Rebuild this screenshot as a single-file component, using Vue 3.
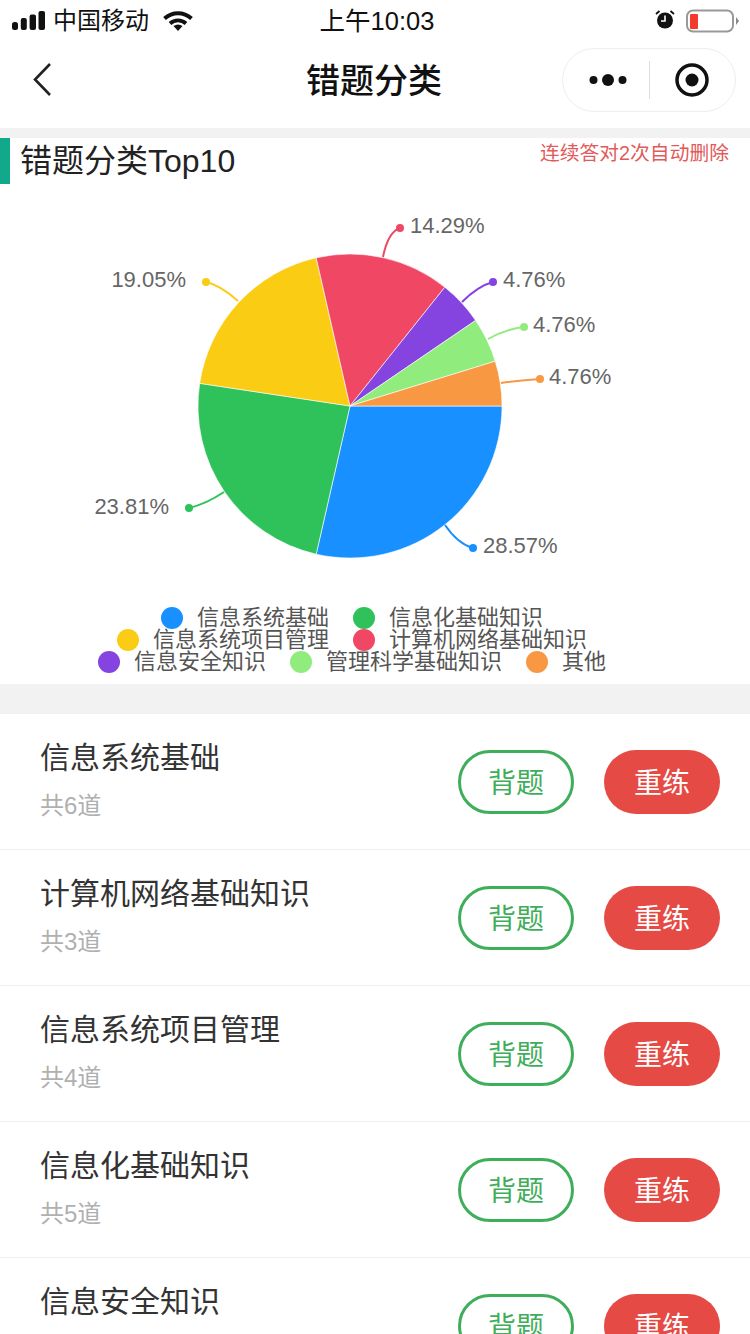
<script setup>
const cx = 350
const cy = 406
const r = 152

const data = [
  { name: '信息系统基础', pct: 28.57, color: '#1890ff' },
  { name: '信息化基础知识', pct: 23.81, color: '#2fc25b' },
  { name: '信息系统项目管理', pct: 19.05, color: '#facc14' },
  { name: '计算机网络基础知识', pct: 14.29, color: '#f04864' },
  { name: '信息安全知识', pct: 4.76, color: '#8543e0' },
  { name: '管理科学基础知识', pct: 4.76, color: '#90ed7d' },
  { name: '其他', pct: 4.76, color: '#f89842' }
]

// slices run clockwise from 3 o'clock
let angle = 0
const slices = data.map((d) => {
  const start = angle
  angle += (d.pct / 100) * Math.PI * 2
  const x1 = cx + r * Math.cos(start)
  const y1 = cy + r * Math.sin(start)
  const x2 = cx + r * Math.cos(angle)
  const y2 = cy + r * Math.sin(angle)
  const large = angle - start > Math.PI ? 1 : 0
  return {
    color: d.color,
    d: `M${cx} ${cy}L${x1} ${y1}A${r} ${r} 0 ${large} 1 ${x2} ${y2}Z`
  }
})

const labels = [
  { text: '28.57%', color: '#1890ff', line: 'M445 525Q458 544 473 548', dot: [473, 548], x: 483, y: 553, anchor: 'start' },
  { text: '23.81%', color: '#2fc25b', line: 'M224 492Q206 504 189 508', dot: [189, 508], x: 169, y: 514, anchor: 'end' },
  { text: '19.05%', color: '#facc14', line: 'M238 301Q220 285 206 282', dot: [206, 282], x: 186, y: 287, anchor: 'end' },
  { text: '14.29%', color: '#f04864', line: 'M383 257Q388 232 400 228', dot: [400, 228], x: 410, y: 233, anchor: 'start' },
  { text: '4.76%', color: '#8543e0', line: 'M462 302Q478 286 493 282', dot: [493, 282], x: 503, y: 287, anchor: 'start' },
  { text: '4.76%', color: '#90ed7d', line: 'M488 339Q506 329 524 327', dot: [524, 327], x: 533, y: 332, anchor: 'start' },
  { text: '4.76%', color: '#f89842', line: 'M501 383Q522 380 540 379', dot: [540, 379], x: 549, y: 384, anchor: 'start' }
]

const legendRows = [data.slice(0, 2), data.slice(2, 4), data.slice(4)]

const list = [
  { name: '信息系统基础', count: 6 },
  { name: '计算机网络基础知识', count: 3 },
  { name: '信息系统项目管理', count: 4 },
  { name: '信息化基础知识', count: 5 },
  { name: '信息安全知识', count: 1 }
]
</script>

<template>
  <div class="page">
    <div class="status">
      <div class="status-left">
        <svg class="signal" width="34" height="20" viewBox="0 0 34 20">
          <rect x="0" y="11" width="6" height="8" rx="2.500" fill="#111" />
          <rect x="8.800" y="7" width="6" height="12" rx="2" fill="#111" />
          <rect x="17.600" y="3.500" width="6.400" height="15.500" rx="2" fill="#111" />
          <rect x="26.500" y="0" width="6.500" height="19" rx="2" fill="#111" />
        </svg>
        <span class="carrier">中国移动</span>
        <svg class="wifi" width="30" height="20" viewBox="0 0 30 20">
          <path d="M1.500 7.500C9.500 .5 20.500 .5 28.500 7.500" fill="none" stroke="#111" stroke-width="4" />
          <path d="M7 12.500C11.500 8.300 18.500 8.300 23 12.500" fill="none" stroke="#111" stroke-width="3.800" />
          <path d="M10.500 15Q15 12 19.500 15L15 20Z" fill="#111" />
        </svg>
      </div>
      <div class="time">上午10:03</div>
      <div class="status-right">
        <svg class="alarm" width="20" height="20" viewBox="0 0 20 20">
          <circle cx="10" cy="10.500" r="8" fill="#111" />
          <path d="M10 5.500V11H6" fill="none" stroke="#fff" stroke-width="1.600" />
          <path d="M1 4L4.500 1M19 4L15.500 1" stroke="#111" stroke-width="1.800" />
        </svg>
        <svg class="battery" width="53" height="24" viewBox="0 0 53 24">
          <rect x="1" y="1.500" width="46" height="21" rx="6" fill="#fff" stroke="#999" stroke-width="2" />
          <rect x="4" y="5" width="8" height="15" rx="1" fill="#f4392d" />
          <path d="M50 8L53 12L50 16Z" fill="#888" />
        </svg>
      </div>
    </div>

    <div class="nav">
      <div class="nav-left">
        <svg width="20" height="36" viewBox="0 0 20 36">
          <path d="M18 2L3 17.500L18 33" fill="none" stroke="#222" stroke-width="2.600" />
        </svg>
      </div>
      <div class="nav-title">错题分类</div>
      <div class="capsule">
        <div class="capsule-side">
          <svg class="more" width="38" height="16" viewBox="0 0 38 16">
            <circle cx="4.500" cy="8" r="4" fill="#111" />
            <circle cx="19" cy="8" r="6" fill="#111" />
            <circle cx="33.500" cy="8" r="4" fill="#111" />
          </svg>
        </div>
        <div class="capsule-line"></div>
        <div class="capsule-side">
          <svg width="36" height="36" viewBox="0 0 36 36">
            <circle cx="18" cy="18" r="15" fill="none" stroke="#111" stroke-width="3.500" />
            <circle cx="18" cy="18" r="6.500" fill="#111" />
          </svg>
        </div>
      </div>
    </div>

    <div class="band-top"></div>

    <div class="head">
      <div class="head-title">错题分类Top10</div>
      <div class="head-note">连续答对2次自动删除</div>
    </div>

    <svg class="chart" width="750" height="423" viewBox="0 184 750 423">
      <path v-for="s in slices" :key="s.color" :d="s.d" :fill="s.color" stroke="#fff" stroke-width="0.600" />
      <g v-for="l in labels" :key="l.color">
        <path :d="l.line" fill="none" :stroke="l.color" stroke-width="2" />
        <circle :cx="l.dot[0]" :cy="l.dot[1]" r="4" :fill="l.color" />
        <text :x="l.x" :y="l.y" :text-anchor="l.anchor" class="chart-label">{{ l.text }}</text>
      </g>
    </svg>

    <div class="legend">
      <div v-for="(row, i) in legendRows" :key="i" class="legend-row">
        <div v-for="d in row" :key="d.name" class="legend-item">
          <span class="legend-dot" :style="{ background: d.color }"></span>
          <span class="legend-name">{{ d.name }}</span>
        </div>
      </div>
    </div>

    <div class="band"></div>

    <div class="list">
      <div v-for="item in list" :key="item.name" class="row">
        <div class="row-text">
          <div class="row-name">{{ item.name }}</div>
          <div class="row-count">共{{ item.count }}道</div>
        </div>
        <div class="btn btn-outline"><span>背题</span></div>
        <div class="btn btn-solid"><span>重练</span></div>
      </div>
    </div>
  </div>
</template>

<style scoped>
.page {
  width: 750px;
  height: 1334px;
  overflow: hidden;
  background: #fff;
  font-family: "Liberation Sans", "Noto Sans CJK SC", sans-serif;
  color: #333;
}

.status {
  height: 40px;
  display: grid;
  grid-template-columns: 1fr auto 1fr;
  align-items: center;
  padding: 0 11px 0 12px;
  color: #111;
}

.status-left {
  display: flex;
  align-items: center;
}

.carrier {
  font-size: 24px;
  margin: 0 0 4px 7px;
}

.wifi {
  margin-left: 14px;
}

.time {
  font-size: 25.500px;
  margin: 0 0 4px 3px;
}

.status-right {
  display: flex;
  align-items: center;
  justify-content: flex-end;
}

.alarm {
  margin-bottom: 1px;
}

.battery {
  margin-left: 11px;
}

.nav {
  height: 88px;
  padding-bottom: 8px;
  box-sizing: border-box;
  display: grid;
  grid-template-columns: 1fr auto 1fr;
  align-items: center;
}

.nav-left {
  padding-left: 32px;
  display: flex;
  align-items: center;
}

.nav-title {
  font-size: 34px;
  font-weight: 500;
  color: #111;
  margin: 0 2px 4px 0;
}

.capsule {
  justify-self: end;
  margin-right: 14px;
  width: 174px;
  height: 64px;
  box-sizing: border-box;
  border: 1px solid #eee;
  border-radius: 32px;
  display: flex;
  align-items: center;
}

.capsule-side {
  flex: 1;
  display: flex;
  align-items: center;
  justify-content: center;
}

.more {
  margin-left: 4px;
}

.capsule-line {
  width: 1px;
  height: 38px;
  background: #ddd;
}

.band-top {
  height: 10px;
  background: #f2f2f2;
}

.head {
  height: 46px;
  display: flex;
  justify-content: space-between;
  align-items: flex-start;
  border-left: 10px solid #12a88c;
  padding-right: 21px;
}

.head-title {
  font-size: 32px;
  line-height: 46px;
  margin-left: 10px;
  color: #222;
}

.head-note {
  font-size: 19.800px;
  line-height: 30px;
  color: #e25a5a;
}

.chart {
  display: block;
}

.chart-label {
  font-size: 22px;
  fill: #666;
}

.legend {
  height: 77px;
  padding-right: 46px;
  box-sizing: border-box;
}

.legend-row {
  height: 22px;
  display: flex;
  justify-content: center;
  gap: 24px;
}

.legend-item {
  display: flex;
  align-items: center;
  gap: 14px;
}

.legend-dot {
  width: 22px;
  height: 22px;
  border-radius: 50%;
}

.legend-name {
  font-size: 22px;
  line-height: 22px;
  color: #555;
}

.band {
  height: 30px;
  background: #f2f2f2;
}

.row {
  height: 136px;
  box-sizing: border-box;
  border-bottom: 1px solid #eee;
  padding: 0 30px 0 40px;
  display: flex;
  align-items: center;
}

.row-text {
  flex: 1;
  align-self: flex-start;
}

.row-name {
  font-size: 30px;
  line-height: 44px;
  margin-top: 22px;
  color: #333;
}

.row-count {
  font-size: 24px;
  line-height: 32px;
  margin-top: 10px;
  color: #b0b0b0;
}

.btn {
  width: 116px;
  height: 64px;
  box-sizing: border-box;
  border-radius: 32px;
  font-size: 28px;
  display: flex;
  align-items: center;
  justify-content: center;
}

.btn span {
  margin-bottom: 2px;
}

.btn-outline {
  border: 3px solid #3fae5a;
  color: #3fae5a;
  margin-right: 30px;
}

.btn-solid {
  background: #e64a45;
  color: #fff;
}
</style>
